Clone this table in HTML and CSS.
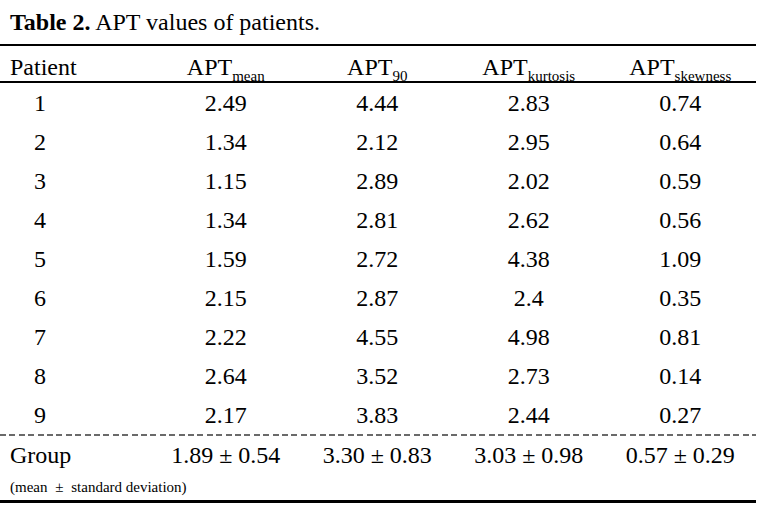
FILE: index.html
```html
<!DOCTYPE html>
<html>
<head>
<meta charset="utf-8">
<link rel="stylesheet" href="styles.css">
</head>
<body>
<div class="caption"><b>Table 2.</b> APT values of patients.</div>
<table class="apt">
  <thead>
    <tr class="head">
      <th class="first">Patient</th>
      <th>APT<sub>mean</sub></th>
      <th>APT<sub>90</sub></th>
      <th>APT<sub>kurtosis</sub></th>
      <th>APT<sub>skewness</sub></th>
    </tr>
  </thead>
  <tbody>
    <tr class="row"><td class="first"><span class="num">1</span></td><td>2.49</td><td>4.44</td><td>2.83</td><td>0.74</td></tr>
    <tr class="row"><td class="first"><span class="num">2</span></td><td>1.34</td><td>2.12</td><td>2.95</td><td>0.64</td></tr>
    <tr class="row"><td class="first"><span class="num">3</span></td><td>1.15</td><td>2.89</td><td>2.02</td><td>0.59</td></tr>
    <tr class="row"><td class="first"><span class="num">4</span></td><td>1.34</td><td>2.81</td><td>2.62</td><td>0.56</td></tr>
    <tr class="row"><td class="first"><span class="num">5</span></td><td>1.59</td><td>2.72</td><td>4.38</td><td>1.09</td></tr>
    <tr class="row"><td class="first"><span class="num">6</span></td><td>2.15</td><td>2.87</td><td>2.4</td><td>0.35</td></tr>
    <tr class="row"><td class="first"><span class="num">7</span></td><td>2.22</td><td>4.55</td><td>4.98</td><td>0.81</td></tr>
    <tr class="row"><td class="first"><span class="num">8</span></td><td>2.64</td><td>3.52</td><td>2.73</td><td>0.14</td></tr>
    <tr class="row"><td class="first"><span class="num">9</span></td><td>2.17</td><td>3.83</td><td>2.44</td><td>0.27</td></tr>
    <tr class="sep"><td colspan="5"></td></tr>
    <tr class="group"><td class="first">Group</td><td>1.89 ± 0.54</td><td>3.30 ± 0.83</td><td>3.03 ± 0.98</td><td>0.57 ± 0.29</td></tr>
    <tr class="note"><td class="first" colspan="5">(mean <span class="pm">±</span> standard deviation)</td></tr>
  </tbody>
</table>
</body>
</html>
```
FILE: styles.css
```css
html, body {
  margin: 0;
  padding: 0;
  background: #fff;
}
body {
  font-family: "Liberation Serif", "Times New Roman", serif;
  color: #000;
  font-size: 24px;
}
.caption {
  padding: 10px 0 0 10px;
  font-size: 24px;
  line-height: 24px;
  box-sizing: border-box;
  height: 44px;
}
.caption b {
  font-weight: bold;
}
.apt {
  width: 756px;
  border-collapse: collapse;
  border-spacing: 0;
  table-layout: fixed;
  border-top: 2px solid #000;
  border-bottom: 3px solid #000;
}
.apt th, .apt td {
  padding: 0;
  text-align: center;
  font-weight: normal;
  line-height: 24px;
  font-size: 24px;
}
.apt th:nth-child(1), .apt td.first { width: 150px; }
.apt .first {
  text-align: left;
  padding-left: 10px;
}
.head th {
  height: 37px;
  vertical-align: baseline;
  padding-top: 9px;
  box-sizing: border-box;
  border-bottom: 2px solid #000;
}
.head sub {
  font-size: 15px;
  line-height: 0;
  vertical-align: -6px;
}
.row td {
  height: 39px;
  vertical-align: middle;
}
.num {
  display: inline-block;
  width: 60px;
  text-align: center;
}
.sep td {
  height: 2px;
  padding: 0;
  background: repeating-linear-gradient(90deg, #6a6a6a 0 6px, transparent 6px 9.4px);
}
.group td {
  height: 38px;
  vertical-align: middle;
}
.note td {
  height: 26px;
  vertical-align: middle;
  font-size: 15px;
  line-height: 16px;
}
.pm {
  margin: 0 4px;
}
```
